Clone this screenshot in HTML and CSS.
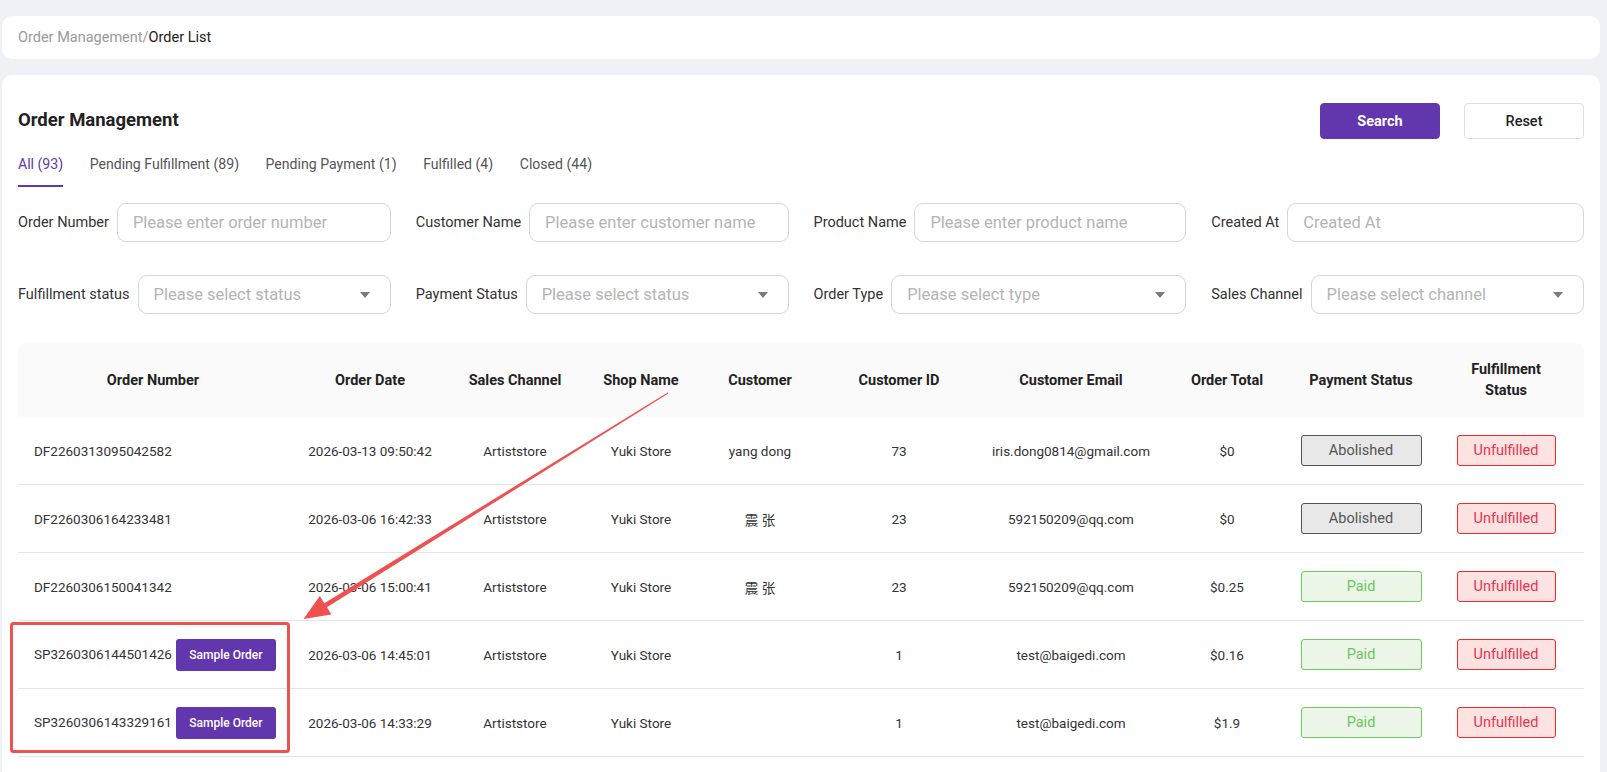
FILE: index.html
```html
<!DOCTYPE html>
<html lang="en">
  <head>
    <meta charset="UTF-8" />
    <meta name="viewport" content="width=device-width, initial-scale=1.0" />
    <title>Order List</title>
    <link rel="stylesheet" href="styles.css">
  </head>
  <body>
    <div class="page">
      <div class="crumb">
        <span class="crumb-parent">Order Management/</span><span class="crumb-current">Order List</span>
      </div>

      <div class="panel">
        <div class="panel-head">
          <h1 class="title">Order Management</h1>
          <div class="actions">
            <button class="btn btn-primary">Search</button>
            <button class="btn">Reset</button>
          </div>
        </div>

        <div class="tabs">
          <span class="tab active">All (93)</span>
          <span class="tab">Pending Fulfillment (89)</span>
          <span class="tab">Pending Payment (1)</span>
          <span class="tab">Fulfilled (4)</span>
          <span class="tab">Closed (44)</span>
        </div>

        <div class="filters">
          <label class="field">
            <span class="field-label">Order Number</span>
            <input class="control" placeholder="Please enter order number" />
          </label>
          <label class="field">
            <span class="field-label">Customer Name</span>
            <input class="control" placeholder="Please enter customer name" />
          </label>
          <label class="field">
            <span class="field-label">Product Name</span>
            <input class="control" placeholder="Please enter product name" />
          </label>
          <label class="field">
            <span class="field-label">Created At</span>
            <input class="control" placeholder="Created At" />
          </label>

          <div class="field">
            <span class="field-label">Fulfillment status</span>
            <div class="control select">
              <span class="placeholder">Please select status</span>
              <svg class="caret" viewBox="0 0 10 6"><path d="M0 0h10L5 6z" /></svg>
            </div>
          </div>
          <div class="field">
            <span class="field-label">Payment Status</span>
            <div class="control select">
              <span class="placeholder">Please select status</span>
              <svg class="caret" viewBox="0 0 10 6"><path d="M0 0h10L5 6z" /></svg>
            </div>
          </div>
          <div class="field">
            <span class="field-label">Order Type</span>
            <div class="control select">
              <span class="placeholder">Please select type</span>
              <svg class="caret" viewBox="0 0 10 6"><path d="M0 0h10L5 6z" /></svg>
            </div>
          </div>
          <div class="field">
            <span class="field-label">Sales Channel</span>
            <div class="control select">
              <span class="placeholder">Please select channel</span>
              <svg class="caret" viewBox="0 0 10 6"><path d="M0 0h10L5 6z" /></svg>
            </div>
          </div>
        </div>

        <table class="orders">
          <colgroup>
            <col class="c-num" />
            <col class="c-date" />
            <col class="c-channel" />
            <col class="c-shop" />
            <col class="c-customer" />
            <col class="c-cid" />
            <col class="c-email" />
            <col class="c-total" />
            <col class="c-pay" />
            <col class="c-ful" />
          </colgroup>
          <thead>
            <tr>
              <th>Order Number</th>
              <th>Order Date</th>
              <th>Sales Channel</th>
              <th>Shop Name</th>
              <th>Customer</th>
              <th>Customer ID</th>
              <th>Customer Email</th>
              <th>Order Total</th>
              <th>Payment Status</th>
              <th>Fulfillment<br />Status</th>
            </tr>
          </thead>
          <tbody>
            <tr>
              <td class="num">DF2260313095042582</td>
              <td>2026-03-13 09:50:42</td>
              <td>Artiststore</td>
              <td>Yuki Store</td>
              <td>yang dong</td>
              <td>73</td>
              <td>iris.dong0814@gmail.com</td>
              <td>$0</td>
              <td><span class="status pay abolished">Abolished</span></td>
              <td><span class="status ful unfulfilled">Unfulfilled</span></td>
            </tr>
            <tr>
              <td class="num">DF2260306164233481</td>
              <td>2026-03-06 16:42:33</td>
              <td>Artiststore</td>
              <td>Yuki Store</td>
              <td>震 张</td>
              <td>23</td>
              <td>592150209@qq.com</td>
              <td>$0</td>
              <td><span class="status pay abolished">Abolished</span></td>
              <td><span class="status ful unfulfilled">Unfulfilled</span></td>
            </tr>
            <tr>
              <td class="num">DF2260306150041342</td>
              <td>2026-03-06 15:00:41</td>
              <td>Artiststore</td>
              <td>Yuki Store</td>
              <td>震 张</td>
              <td>23</td>
              <td>592150209@qq.com</td>
              <td>$0.25</td>
              <td><span class="status pay paid">Paid</span></td>
              <td><span class="status ful unfulfilled">Unfulfilled</span></td>
            </tr>
            <tr>
              <td class="num">SP3260306144501426<span class="tag">Sample Order</span></td>
              <td>2026-03-06 14:45:01</td>
              <td>Artiststore</td>
              <td>Yuki Store</td>
              <td></td>
              <td>1</td>
              <td>test@baigedi.com</td>
              <td>$0.16</td>
              <td><span class="status pay paid">Paid</span></td>
              <td><span class="status ful unfulfilled">Unfulfilled</span></td>
            </tr>
            <tr>
              <td class="num">SP3260306143329161<span class="tag">Sample Order</span></td>
              <td>2026-03-06 14:33:29</td>
              <td>Artiststore</td>
              <td>Yuki Store</td>
              <td></td>
              <td>1</td>
              <td>test@baigedi.com</td>
              <td>$1.9</td>
              <td><span class="status pay paid">Paid</span></td>
              <td><span class="status ful unfulfilled">Unfulfilled</span></td>
            </tr>
          </tbody>
        </table>
      </div>
    </div>

    <!-- red callout drawn over the table -->
    <svg class="annotation" viewBox="0 0 1607 772">
      <polygon points="668.3,393.5 326.9,607.3 331.4,614.6 303.5,619 319.8,596 324.3,603.3 667.7,392.5" />
      <rect x="11.5" y="623.5" width="277" height="128" rx="2" />
    </svg>
  </body>
</html>
```

FILE: styles.css
```css
:root {
  --purple: #6236ad;
  --page-bg: #eef1f6;
  --line: #e4e4e4;
  --text: #333;
  --muted: #b4b4b4;
  --callout: #ef5050;
}

body {
  margin: 0;
  position: relative;
  background: var(--page-bg);
  font-family: Roboto, "Noto Sans CJK SC", sans-serif;
  color: var(--text);
}

.page {
  padding: 16px 7px 0 2px;
}

.crumb {
  height: 43px;
  display: flex;
  align-items: center;
  padding-left: 16px;
  background: #fff;
  border-radius: 10px;
  font-size: 14.5px;
}

.crumb-parent {
  color: #9a9a9a;
}

.crumb-current {
  color: #222;
}

.panel {
  margin-top: 16px;
  padding: 28px 16px 30px;
  background: #fff;
  border-radius: 10px 10px 0 0;
}

.panel-head {
  display: flex;
  align-items: center;
  justify-content: space-between;
  height: 36px;
}

.title {
  margin: 0 0 3px;
  font-size: 18.5px;
  font-weight: 700;
  color: #222;
}

.actions {
  display: flex;
  gap: 24px;
}

.btn {
  width: 120px;
  height: 36px;
  border: 1px solid #dcdfe6;
  border-radius: 4px;
  background: #fff;
  font-family: inherit;
  font-size: 14.5px;
  font-weight: 500;
  color: #222;
}

.btn-primary {
  background: var(--purple);
  border-color: var(--purple);
  color: #fff;
  font-weight: 700;
}

/* tabs */
.tabs {
  display: flex;
  gap: 26.5px;
  margin-top: 15px;
}

.tab {
  padding-bottom: 11px;
  border-bottom: 2px solid transparent;
  font-size: 14.1px;
  line-height: 20px;
  color: #555;
}

.tab.active {
  color: var(--purple);
  border-bottom-color: var(--purple);
}

/* filter form */
.filters {
  display: grid;
  grid-template-columns: repeat(4, 1fr);
  column-gap: 25px;
  row-gap: 33px;
  margin-top: 16px;
}

.field {
  display: flex;
  align-items: center;
  gap: 8px;
}

.field-label {
  font-size: 14.5px;
  color: var(--text);
  white-space: nowrap;
}

.control {
  flex: 1;
  min-width: 0;
  height: 39px;
  box-sizing: border-box;
  padding: 0 15px;
  border: 1px solid #d3d6dc;
  border-radius: 9px;
  background: #fff;
  font-family: inherit;
  font-size: 16.5px;
  color: var(--text);
  outline: none;
}

.control::placeholder {
  color: var(--muted);
}

.select {
  display: flex;
  align-items: center;
  justify-content: space-between;
}

.placeholder {
  color: var(--muted);
}

.caret {
  width: 10px;
  height: 6px;
  margin-right: 5px;
  fill: #7a7a7a;
}

/* table */
.orders {
  width: 100%;
  margin-top: 29px;
  border-collapse: separate;
  border-spacing: 0;
  table-layout: fixed;
  font-size: 13.5px;
}

.c-num { width: 270px; }
.c-date { width: 164px; }
.c-channel { width: 126px; }
.c-shop { width: 126px; }
.c-customer { width: 112px; }
.c-cid { width: 166px; }
.c-email { width: 178px; }
.c-total { width: 134px; }
.c-pay { width: 134px; }
.c-ful { width: 156px; }

.orders th {
  height: 74px;
  padding: 0 6px;
  background: #fafafa;
  font-size: 14.5px;
  font-weight: 700;
  line-height: 21px;
  color: #222;
}

.orders th:first-child {
  border-top-left-radius: 8px;
}

.orders th:last-child {
  border-top-right-radius: 8px;
}

.orders td {
  height: 67px;
  padding: 0 6px;
  border-bottom: 1px solid var(--line);
  text-align: center;
  color: var(--text);
  white-space: nowrap;
}

.orders td.num {
  padding-left: 16px;
  text-align: left;
}

.tag {
  display: inline-block;
  width: 100px;
  height: 32px;
  margin-left: 4px;
  border-radius: 3px;
  background: var(--purple);
  color: #fff;
  font-size: 12px;
  font-weight: 500;
  line-height: 32px;
  text-align: center;
  vertical-align: middle;
}

.status {
  display: inline-block;
  box-sizing: border-box;
  height: 31px;
  border: 1px solid;
  border-radius: 3px;
  font-size: 14.5px;
  line-height: 29px;
  vertical-align: middle;
}

.status.pay { width: 121px; }
.status.ful { width: 99px; }

.abolished {
  background: #e8e8e8;
  border-color: #555;
  color: #555;
}

.paid {
  background: #ebf6e9;
  border-color: #6dcd5b;
  color: #6cc75a;
}

.unfulfilled {
  background: #fde2e2;
  border-color: #ee2a2a;
  color: #e5334f;
}

/* callout overlay */
.annotation {
  position: absolute;
  top: 0;
  left: 0;
  width: 1607px;
  height: 772px;
  pointer-events: none;
}

.annotation polygon {
  fill: var(--callout);
}

.annotation rect {
  fill: none;
  stroke: var(--callout);
  stroke-width: 3;
}
```
